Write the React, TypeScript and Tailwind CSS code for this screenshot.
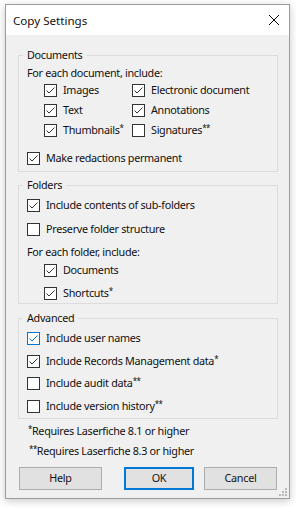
import React from 'react';

const font = { fontFamily: '"Noto Sans", "Liberation Sans", sans-serif' };

const Box: React.FC<{ checked?: boolean; focus?: boolean }> = ({ checked, focus }) => (
  <span
    className={`flex h-[13px] w-[13px] shrink-0 items-center justify-center border bg-white ${
      focus ? 'border-[#0078d7]' : 'border-[#333333]'
    }`}
  >
    {checked && (
      <svg width="11" height="11" viewBox="0 0 11 11" fill="none">
        <path
          d="M1.5 5.5L4 8L9.5 2.5"
          stroke={focus ? '#0078d7' : '#333333'}
          strokeWidth="1"
        />
      </svg>
    )}
  </span>
);

const Check: React.FC<{ label: React.ReactNode; checked?: boolean; focus?: boolean; className?: string }> = ({
  label,
  checked,
  focus,
  className = '',
}) => (
  <div className={`flex h-[20px] items-center gap-[6px] ${className}`}>
    <Box checked={checked} focus={focus} />
    <span className="whitespace-nowrap pt-[1px]">{label}</span>
  </div>
);

const Group: React.FC<{ title: string; className?: string; children: React.ReactNode }> = ({
  title,
  className = '',
  children,
}) => (
  <fieldset className={`w-[260px] border border-[#dcdcdc] pl-[4px] ${className}`}>
    <legend className="h-[14px] px-[4px] leading-[14px]">{title}</legend>
    <div className="pl-[4px]">{children}</div>
  </fieldset>
);

const Sup: React.FC<{ n: string }> = ({ n }) => (
  <span className="relative top-[-3px] text-[8px] tracking-[-0.5px]">{n}</span>
);

const App: React.FC = () => {
  return (
    <div
      className="h-[508px] w-[296px] bg-white pl-[5px] pt-[4px] text-[10.8px] tracking-[-0.3px] text-[#111]"
      style={font}
    >
      <div className="relative h-[495px] w-[285px] border border-[#9c9c9c] bg-[#f0f0f0] shadow-[0_2px_8px_rgba(0,0,0,0.22)]">
        {/* title bar */}
        <div className="flex h-[30px] items-center justify-between bg-white pl-[7px] pr-[8px]">
          <span className="pt-[1px] text-[11.6px] tracking-normal">Copy Settings</span>
          <svg width="12" height="12" viewBox="0 0 12 12" className="mr-[1px]">
            <path d="M1 1L11 11M11 1L1 11" stroke="#000" strokeWidth="1" />
          </svg>
        </div>

        <div className="px-[12px] pt-[13px]">
          <Group title="Documents" className="pb-[3px]">
            <div className="mt-[1px] flex h-[20px] items-center pt-[1px]">For each document, include:</div>
            <div className="mt-[-3px] grid grid-cols-[88px_1fr] pl-[17px]">
              <Check checked label="Images" />
              <Check checked label="Electronic document" />
              <Check checked label="Text" />
              <Check checked label="Annotations" />
              <Check checked label={<>Thumbnails<Sup n="*" /></>} />
              <Check label={<>Signatures<Sup n="**" /></>} />
            </div>
            <Check checked label="Make redactions permanent" className="mt-[8px]" />
          </Group>

          <Group title="Folders" className="mt-[6px] pb-[1px]">
            <Check checked label="Include contents of sub-folders" className="mt-[3px]" />
            <Check label="Preserve folder structure" className="mt-[4px]" />
            <div className="mt-[3px] flex h-[20px] items-center pt-[1px]">For each folder, include:</div>
            <div className="pl-[17px]">
              <Check checked label="Documents" className="mt-[-2px]" />
              <Check checked label={<>Shortcuts<Sup n="*" /></>} className="mt-[4px] !h-[18px]" />
            </div>
          </Group>

          <Group title="Advanced" className="mt-[7px] pb-[2px]">
            <Check checked focus label="Include user names" className="mt-[3px]" />
            <Check checked label={<>Include Records Management data<Sup n="*" /></>} className="mt-[3px]" />
            <Check label={<>Include audit data<Sup n="**" /></>} className="mt-[2px]" />
            <Check label={<>Include version history<Sup n="**" /></>} className="mt-[3px]" />
          </Group>

          <div className="mt-[2px] flex h-[20px] items-center pl-[10px] pt-[1px]">
            <Sup n="*" />Requires Laserfiche 8.1 or higher
          </div>
          <div className="flex h-[20px] items-center pl-[11px] pt-[1px]">
            <Sup n="**" />Requires Laserfiche 8.3 or higher
          </div>

          <div className="mt-[6px] flex items-center">
            <button className="ml-[1px] h-[23px] w-[83px] border border-[#adadad] bg-[#e1e1e1]">Help</button>
            <button className="ml-[22px] h-[23px] w-[70px] border-2 border-[#0078d7] bg-[#e1e1e1]">OK</button>
            <button className="ml-[10px] h-[23px] w-[73px] border border-[#adadad] bg-[#e1e1e1]">Cancel</button>
          </div>
        </div>

        {/* resize grip */}
        <svg width="8" height="8" viewBox="0 0 8 8" className="absolute bottom-[2px] right-[2px]">
          {[
            [6, 0],
            [6, 3],
            [3, 3],
            [6, 6],
            [3, 6],
            [0, 6],
          ].map(([x, y]) => (
            <rect key={`${x}-${y}`} x={x} y={y} width="2" height="2" fill="#b8b8b8" />
          ))}
        </svg>
      </div>
    </div>
  );
};

export default App;
